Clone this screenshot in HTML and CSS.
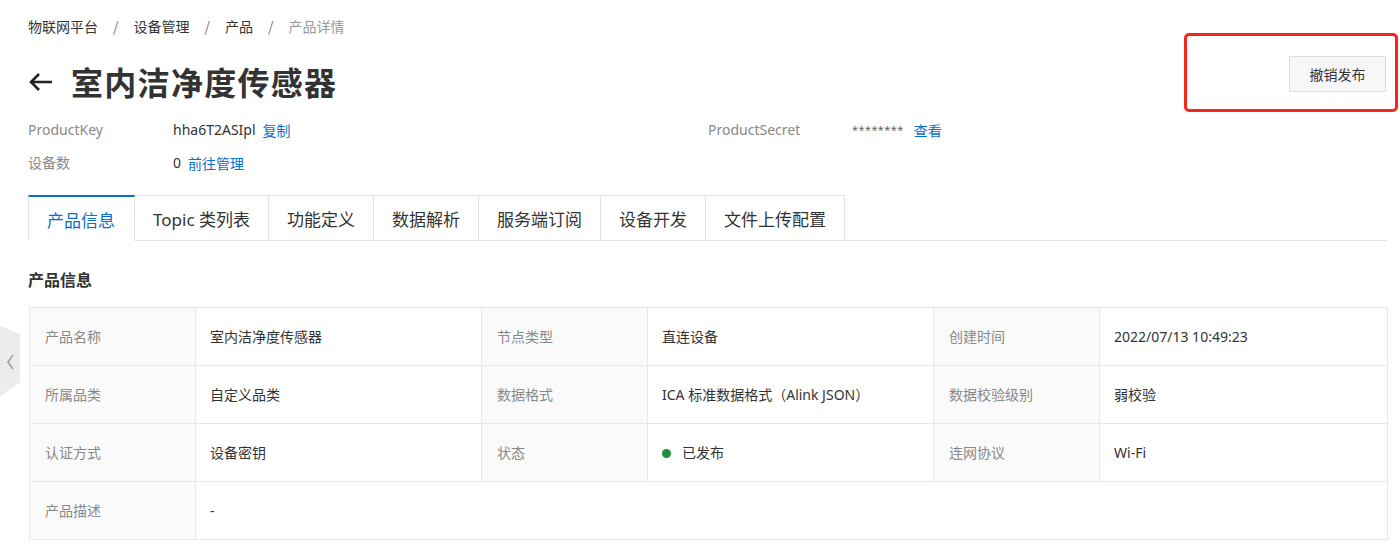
FILE: index.html
```html
<!DOCTYPE html>
<html lang="zh-CN">
<head>
<meta charset="utf-8">
<title>产品详情</title>
<link rel="stylesheet" href="styles.css">
</head>
<body>
<div class="side-handle">
  <svg class="side-shape" width="20" height="74" viewBox="0 0 20 74"><polygon points="0,2 20,10 20,58 0,73" fill="#ececec"/><polyline points="13,31 8,38 13,45" fill="none" stroke="#a8a8a8" stroke-width="1.8"/></svg>
</div>
<div class="page">
  <nav class="breadcrumb">
    <span class="crumb">物联网平台</span><span class="sep">/</span>
    <span class="crumb">设备管理</span><span class="sep">/</span>
    <span class="crumb">产品</span><span class="sep">/</span>
    <span class="crumb current">产品详情</span>
  </nav>

  <header class="header">
    <div class="title-wrap">
      <svg class="back" width="26" height="22" viewBox="0 0 26 22"><path d="M24 11H3M11 3L3 11l8 8" fill="none" stroke="#222" stroke-width="2.6" stroke-linecap="butt" stroke-linejoin="miter"/></svg>
      <h1 class="title">室内洁净度传感器</h1>
    </div>
    <button class="btn">撤销发布</button>
  </header>
  <div class="highlight"></div>

  <div class="meta">
    <span class="meta-label">ProductKey</span>
    <span class="meta-value">hha6T2ASIpl<a class="link">复制</a></span>
    <span class="meta-label">ProductSecret</span>
    <span class="meta-value"><span class="stars">********</span><a class="link">查看</a></span>
    <span class="meta-label">设备数</span>
    <span class="meta-value">0<a class="link">前往管理</a></span>
  </div>

  <div class="tabs">
    <div class="tab active">产品信息</div>
    <div class="tab">Topic 类列表</div>
    <div class="tab">功能定义</div>
    <div class="tab">数据解析</div>
    <div class="tab">服务端订阅</div>
    <div class="tab">设备开发</div>
    <div class="tab">文件上传配置</div>
    <div class="tab-fill"></div>
  </div>

  <h2 class="section-title">产品信息</h2>

  <table class="info">
    <colgroup>
      <col class="c-label"><col class="c-value"><col class="c-label"><col class="c-value"><col class="c-label"><col class="c-value-last">
    </colgroup>
    <tr>
      <td class="lbl">产品名称</td><td class="val">室内洁净度传感器</td>
      <td class="lbl">节点类型</td><td class="val">直连设备</td>
      <td class="lbl">创建时间</td><td class="val">2022/07/13 10:49:23</td>
    </tr>
    <tr>
      <td class="lbl">所属品类</td><td class="val">自定义品类</td>
      <td class="lbl">数据格式</td><td class="val">ICA 标准数据格式（Alink JSON）</td>
      <td class="lbl">数据校验级别</td><td class="val">弱校验</td>
    </tr>
    <tr>
      <td class="lbl">认证方式</td><td class="val">设备密钥</td>
      <td class="lbl">状态</td><td class="val"><span class="dot"></span>已发布</td>
      <td class="lbl">连网协议</td><td class="val">Wi-Fi</td>
    </tr>
    <tr>
      <td class="lbl">产品描述</td><td class="val" colspan="5">-</td>
    </tr>
  </table>
</div>
</body>
</html>
```
FILE: styles.css
```css
* { box-sizing: border-box; }
html, body { margin: 0; padding: 0; background: #fff; }
body {
  font-family: "Noto Sans", "Noto Sans CJK SC", sans-serif;
  font-size: 14px;
  color: #333;
}
.page {
  padding: 16px 13px 0 28px;
  position: relative;
}
.side-handle {
  position: absolute;
  left: 0;
  top: 324px;
  width: 20px;
  height: 74px;
}
.side-shape { display: block; }

.breadcrumb {
  display: flex;
  align-items: center;
  line-height: 20px;
  height: 20px;
  font-family: "Noto Sans CJK SC", sans-serif;
  color: #333;
}
.sep { color: #777; margin: 0 15px; }
.crumb.current { color: #999; }

.header {
  margin-top: 20px;
  display: flex;
  justify-content: space-between;
  align-items: flex-start;
}
.title-wrap {
  display: flex;
  align-items: center;
  margin-top: 5px;
  height: 40px;
}
.back { display: block; margin-right: 17px; margin-top: 2px; }
.title {
  margin: 0;
  font-family: "Noto Sans CJK SC", sans-serif;
  font-size: 32px;
  font-weight: 700;
  line-height: 40px;
  color: #333;
  letter-spacing: 1.3px;
}
.btn {
  width: 97px;
  height: 36px;
  margin-right: 1px;
  background: #f7f7f7;
  border: 1px solid #dedede;
  border-radius: 0;
  font-family: "Noto Sans CJK SC", sans-serif;
  font-size: 14px;
  color: #333;
  padding: 0;
}
.highlight {
  position: absolute;
  left: 1184px;
  top: 33px;
  width: 214px;
  height: 79px;
  border: 3px solid #f2281f;
  border-radius: 5px;
  pointer-events: none;
}

.meta {
  margin-top: 19px;
  display: grid;
  grid-template-columns: 145px 535px 144px 1fr;
  row-gap: 13px;
  line-height: 20px;
}
.meta-label { color: #888; }
.meta-value { color: #333; display: flex; align-items: center; }
.link { color: #0a6fcb; margin-left: 7px; cursor: pointer; font-family: "Noto Sans CJK SC", sans-serif; }
.stars { font-size: 11px; color: #666; letter-spacing: 0.4px; margin-right: 3px; }

.tabs {
  margin-top: 22px;
  display: flex;
  height: 46px;
}
.tab {
  height: 46px;
  padding: 0 18px;
  display: flex;
  align-items: center;
  font-size: 17px;
  color: #333;
  font-family: "Noto Sans", "Noto Sans CJK SC", sans-serif;
  border-top: 1px solid #e3e3e3;
  border-right: 1px solid #e3e3e3;
  border-bottom: 1px solid #e3e3e3;
  background: #fff;
}
.tab.active {
  padding: 1px 19px 0 18px;
  color: #0a6fcb;
  border-top: 2px solid #0a6fcb;
  border-left: 1px solid #e3e3e3;
  border-bottom-color: transparent;
}
.tab-fill {
  flex: 1;
  border-bottom: 1px solid #e3e3e3;
}

.section-title {
  margin: 26px 0 0;
  font-size: 16px;
  line-height: 24px;
  font-weight: 700;
  font-family: "Noto Sans CJK SC", sans-serif;
  color: #333;
}

.info {
  margin-top: 16px;
  margin-left: 1px;
  width: 1358px;
  border-collapse: collapse;
  table-layout: fixed;
}
.c-label { width: 166px; }
.c-value { width: 286px; }
.c-value-last { width: 288px; }
.info td {
  height: 58px;
  border: 1px solid #e8e8e8;
  padding: 0 14px;
  line-height: 20px;
  vertical-align: middle;
}
.info td.lbl { background: #fafafa; color: #888; padding-left: 15px; }
.info td.val { background: #fff; color: #333; }
.dot {
  display: inline-block;
  width: 9px;
  height: 9px;
  border-radius: 50%;
  background: #1f9138;
  margin: 0 11px 0 0;
  vertical-align: 0;
}
```
